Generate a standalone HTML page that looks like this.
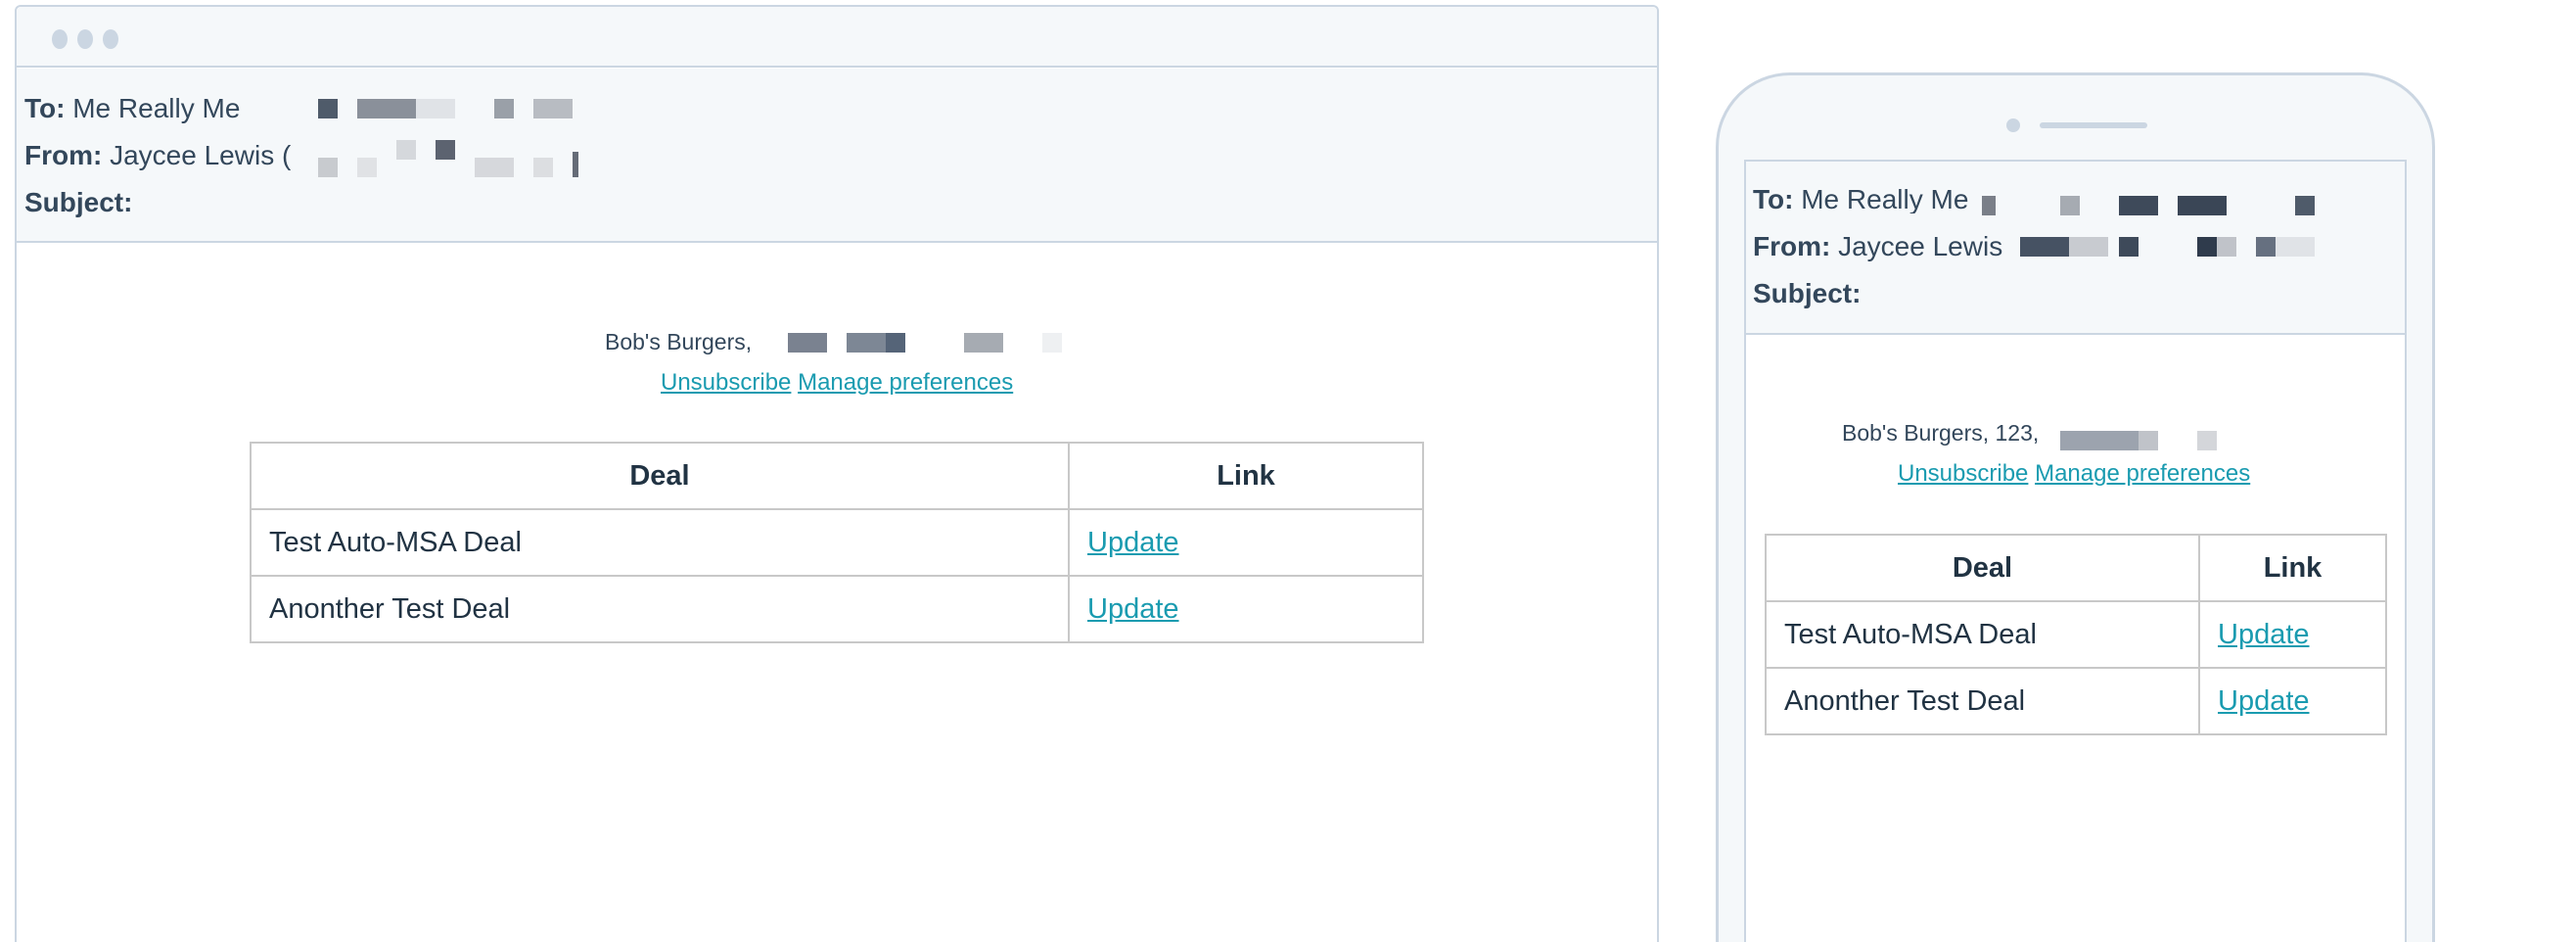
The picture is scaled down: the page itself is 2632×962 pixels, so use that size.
<!DOCTYPE html>
<html style="height:962px;overflow:hidden"><head><meta charset="utf-8"><style>
*{margin:0;padding:0;box-sizing:border-box}
body{width:2632px;height:962px;background:#fff;position:relative;overflow:hidden;font-family:"Liberation Sans",sans-serif;color:#213343}
.a{position:absolute}
.hdr{font-size:28px;color:#33475b;line-height:1}
.hdr b{color:#33475b}
.px{position:absolute;height:20px}
a{color:#1a9bb0;text-decoration:underline}
table{border-collapse:collapse;position:absolute;font-size:29px;color:#213343}
td,th{border:2px solid #c8c8c8;padding:0 18px;text-align:left;font-weight:normal}
th{text-align:center;font-weight:bold}
</style></head><body>
<!-- desktop -->
<div class="a" style="left:15px;top:5px;width:1680px;height:957px;border:2px solid #cbd6e2;border-bottom:none;border-radius:6px 6px 0 0;background:#fff"></div>
<div class="a" style="left:17px;top:7px;width:1676px;height:62px;background:#f5f8fa;border-bottom:2px solid #cbd6e2;border-radius:5px 5px 0 0"></div>
<div class="a" style="left:53px;top:30px;width:16px;height:20px;border-radius:50%;background:#cbd6e2"></div>
<div class="a" style="left:79px;top:30px;width:16px;height:20px;border-radius:50%;background:#cbd6e2"></div>
<div class="a" style="left:105px;top:30px;width:16px;height:20px;border-radius:50%;background:#cbd6e2"></div>
<div class="a" style="left:17px;top:70px;width:1676px;height:178px;background:#f5f8fa;border-bottom:2px solid #cbd6e2"></div>
<div class="a hdr" style="left:25px;top:97px"><b>To:</b> Me Really Me</div>
<div class="a hdr" style="left:25px;top:145px"><b>From:</b> Jaycee Lewis (</div>
<div class="a hdr" style="left:25px;top:193px"><b>Subject:</b></div>
<div class="px" style="left:325px;top:101px;width:20px;background:#4f5b6a"></div>
<div class="px" style="left:365px;top:101px;width:60px;background:#8a909a"></div>
<div class="px" style="left:425px;top:101px;width:40px;background:#e0e3e7"></div>
<div class="px" style="left:505px;top:101px;width:20px;background:#9aa0a8"></div>
<div class="px" style="left:545px;top:101px;width:40px;background:#b8bcc2"></div>
<div class="px" style="left:405px;top:143px;width:20px;background:#d5d8dc"></div>
<div class="px" style="left:445px;top:143px;width:20px;background:#5c6370"></div>
<div class="px" style="left:325px;top:161px;width:20px;background:#c8cbcf"></div>
<div class="px" style="left:365px;top:161px;width:20px;background:#e0e2e5"></div>
<div class="px" style="left:485px;top:161px;width:40px;background:#d6d8dc"></div>
<div class="px" style="left:545px;top:161px;width:20px;background:#dcdee1"></div>
<div class="px" style="left:585px;top:155px;width:6px;height:26px;background:#666c77"></div>
<div class="a" style="left:618px;top:336px;font-size:23px;color:#33475b">Bob's Burgers,</div>
<div class="px" style="left:805px;top:340px;width:40px;background:#7a8290"></div>
<div class="px" style="left:865px;top:340px;width:40px;background:#7d8795"></div>
<div class="px" style="left:905px;top:340px;width:20px;background:#556478"></div>
<div class="px" style="left:985px;top:340px;width:40px;background:#a6abb2"></div>
<div class="px" style="left:1065px;top:340px;width:20px;background:#eef0f2"></div>
<div class="a" style="left:675px;top:377px;font-size:24px"><a>Unsubscribe</a> <a>Manage preferences</a></div>
<table style="left:255px;top:451px;width:1200px">
<tr style="height:68px"><th style="width:836px">Deal</th><th>Link</th></tr>
<tr style="height:68px"><td>Test Auto-MSA Deal</td><td><a>Update</a></td></tr>
<tr style="height:68px"><td>Anonther Test Deal</td><td><a>Update</a></td></tr>
</table>
<!-- phone -->
<div class="a" style="left:1753px;top:74px;width:735px;height:888px;border:3px solid #cbd6e2;border-bottom:none;border-radius:76px 76px 0 0;background:#f5f8fa"></div>
<div class="a" style="left:2050px;top:121px;width:14px;height:14px;border-radius:50%;background:#cbd6e2"></div>
<div class="a" style="left:2084px;top:125px;width:110px;height:6px;border-radius:3px;background:#cbd6e2"></div>
<div class="a" style="left:1782px;top:163px;width:677px;height:799px;border:2px solid #cbd6e2;border-bottom:none;background:#fff"></div>
<div class="a" style="left:1784px;top:165px;width:673px;height:177px;background:#f5f8fa;border-bottom:2px solid #cbd6e2"></div>
<div class="a hdr" style="left:1791px;top:190px;width:220px;overflow:hidden;white-space:nowrap"><b>To:</b> Me Really Me</div>
<div class="a hdr" style="left:1791px;top:238px"><b>From:</b> Jaycee Lewis</div>
<div class="a hdr" style="left:1791px;top:286px"><b>Subject:</b></div>
<div class="px" style="left:2025px;top:200px;width:14px;background:#7a7f88"></div>
<div class="px" style="left:2105px;top:200px;width:20px;background:#a6abb2"></div>
<div class="px" style="left:2165px;top:200px;width:40px;background:#3e4a5a"></div>
<div class="px" style="left:2225px;top:200px;width:50px;background:#3a4656"></div>
<div class="px" style="left:2345px;top:200px;width:20px;background:#4f5b6a"></div>
<div class="px" style="left:2064px;top:242px;width:50px;background:#465263"></div>
<div class="px" style="left:2114px;top:242px;width:40px;background:#c8cbd0"></div>
<div class="px" style="left:2165px;top:242px;width:20px;background:#3e4a5a"></div>
<div class="px" style="left:2245px;top:242px;width:20px;background:#2f3b4c"></div>
<div class="px" style="left:2265px;top:242px;width:20px;background:#c0c3c9"></div>
<div class="px" style="left:2305px;top:242px;width:20px;background:#667080"></div>
<div class="px" style="left:2325px;top:242px;width:40px;background:#e0e3e7"></div>
<div class="a" style="left:1882px;top:429px;font-size:23px;color:#33475b">Bob's Burgers, 123,</div>
<div class="px" style="left:2105px;top:440px;width:80px;background:#9ca3ae"></div>
<div class="px" style="left:2185px;top:440px;width:20px;background:#c0c3c9"></div>
<div class="px" style="left:2245px;top:440px;width:20px;background:#d4d6da"></div>
<div class="a" style="left:1939px;top:470px;font-size:24px"><a>Unsubscribe</a> <a>Manage preferences</a></div>
<table style="left:1803px;top:545px;width:636px">
<tr style="height:68px"><th style="width:443px">Deal</th><th>Link</th></tr>
<tr style="height:68px"><td>Test Auto-MSA Deal</td><td><a>Update</a></td></tr>
<tr style="height:68px"><td>Anonther Test Deal</td><td><a>Update</a></td></tr>
</table>
</body></html>
